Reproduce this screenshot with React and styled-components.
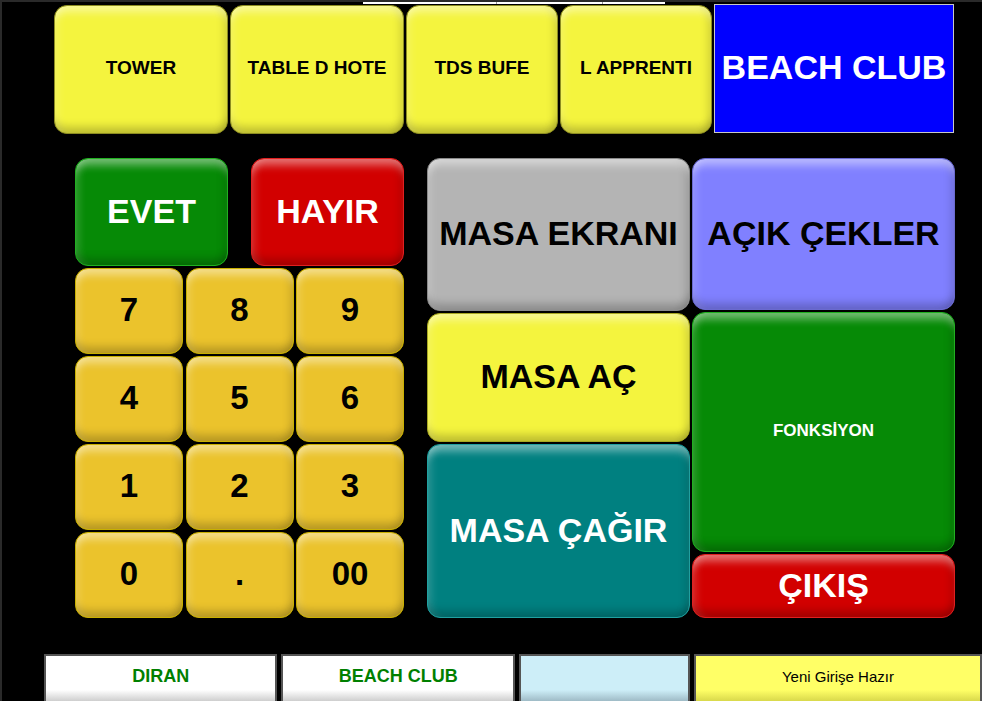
import styled, { createGlobalStyle, css } from "styled-components";

const Global = createGlobalStyle`
  html, body {
    margin: 0;
    padding: 0;
    background: #000;
    overflow: hidden;
  }
  body {
    font-family: "Liberation Sans", Arial, sans-serif;
  }
`

const Screen = styled.div`
  width: 980px;
  height: 699px;
  border-left: 2px solid #2a2a2a;
  border-top: 2px solid #2a2a2a;
  background: #000;
  display: flex;
  flex-direction: column;
  overflow: hidden;
`

const TopStrip = styled.div`
  height: 2px;
  padding-left: 361px;
  display: flex;
`

const WhiteLine = styled.div`
  width: 302px;
  height: 2px;
  background: linear-gradient(90deg, #fff 0 44%, #999 44% 44.4%, #fff 44.4% 79%, #999 79% 79.4%, #fff 79.4%);
`

const bevel = css`
  border-radius: 13px;
  box-shadow:
    inset 0 12px 8px -6px rgba(255, 255, 255, 0.45),
    inset 0 -12px 8px -6px rgba(0, 0, 0, 0.22),
    inset 9px 0 8px -6px rgba(255, 255, 255, 0.18),
    inset -9px 0 8px -6px rgba(0, 0, 0, 0.14);
`

const Key = styled.div`
  ${bevel};
  box-sizing: border-box;
  display: flex;
  align-items: center;
  justify-content: center;
  text-align: center;
  font-weight: bold;
  background: ${p => p.$bg};
  color: ${p => p.$color || "#000"};
  font-size: ${p => p.$size || 34}px;
  border: 1px solid ${p => p.$edge || "rgba(0,0,0,0.35)"};
  user-select: none;
`

const TopRow = styled.div`
  display: flex;
  gap: 2px;
  padding: 1px 0 0 52px;
  height: 129px;
`

const TopKey = styled(Key)`
  width: ${p => p.$w}px;
  height: 129px;
  font-size: 19px;
  padding-bottom: 4px;
`

const ClubBanner = styled.div`
  box-sizing: border-box;
  width: 240px;
  height: 129px;
  margin-top: -1px;
  padding-bottom: 2px;
  background: #0000ff;
  border: 1px solid #c8c8c8;
  color: #fff;
  font-weight: bold;
  font-size: 34px;
  display: flex;
  align-items: center;
  justify-content: center;
`

const Main = styled.div`
  display: flex;
  padding: 24px 0 0 73px;
  gap: 23px;
`

const LeftPad = styled.div`
  display: flex;
  flex-direction: column;
  gap: 2px;
  width: 329px;
`

const AnswerRow = styled.div`
  display: flex;
  justify-content: space-between;
  height: 108px;
`

const AnswerKey = styled(Key)`
  width: 153px;
  height: 108px;
  padding-bottom: 2px;
`

const NumGrid = styled.div`
  display: grid;
  grid-template-columns: 108px 108px 108px;
  grid-auto-rows: 86px;
  gap: 2px 2.5px;
`

const NumKey = styled(Key)`
  font-size: 33px;
  border-color: #c9b000;
  padding-bottom: 2px;
`

const Actions = styled.div`
  display: grid;
  grid-template-columns: 263px 263px;
  gap: 2px;
`

const ActionCol = styled.div`
  display: flex;
  flex-direction: column;
  gap: 2px;
`

const ActionKey = styled(Key)`
  height: ${p => p.$h}px;
  padding-bottom: 2px;
`

const Footer = styled.div`
  display: flex;
  padding: 36px 0 0 42px;
  gap: 4px;
`

const Tile = styled.div`
  box-sizing: border-box;
  width: ${p => p.$w}px;
  height: 52px;
  padding-bottom: 10px;
  border: 2px solid #555;
  border-bottom: none;
  background: linear-gradient(180deg, ${p => p.$bg} 0 68%, ${p => p.$shade} 100%);
  color: ${p => p.$color || "#000"};
  font-weight: ${p => (p.$plain ? "normal" : "bold")};
  font-size: ${p => p.$size || 18}px;
  display: flex;
  align-items: center;
  justify-content: center;
`

const YELLOW = "#f4f43e";
const GOLD = "#ebc32c";

const tops = [
  { label: "TOWER", w: 174 },
  { label: "TABLE D HOTE", w: 174 },
  { label: "TDS BUFE", w: 152 },
  { label: "L APPRENTI", w: 152 },
];

const keys = ["7", "8", "9", "4", "5", "6", "1", "2", "3", "0", ".", "00"];

const App = () => (
  <Screen>
    <Global />
    <TopStrip>
      <WhiteLine />
    </TopStrip>
    <TopRow>
      {tops.map(t => (
        <TopKey key={t.label} $w={t.w} $bg={YELLOW} $edge="#8c8c20">
          {t.label}
        </TopKey>
      ))}
      <ClubBanner>BEACH CLUB</ClubBanner>
    </TopRow>

    <Main>
      <LeftPad>
        <AnswerRow>
          <AnswerKey $bg="#068a06" $color="#fff" $edge="#20b020">EVET</AnswerKey>
          <AnswerKey $bg="#d20000" $color="#fff" $edge="#e02020">HAYIR</AnswerKey>
        </AnswerRow>
        <NumGrid>
          {keys.map(k => (
            <NumKey key={k} $bg={GOLD}>{k}</NumKey>
          ))}
        </NumGrid>
      </LeftPad>

      <Actions>
        <ActionCol>
          <ActionKey $h={153} $bg="#b4b4b4" $edge="#8a8a8a">MASA EKRANI</ActionKey>
          <ActionKey $h={129} $bg="#f4f43e" $edge="#a8a820">MASA AÇ</ActionKey>
          <ActionKey $h={174} $bg="#008080" $color="#fff" $edge="#20a0a0">MASA ÇAĞIR</ActionKey>
        </ActionCol>
        <ActionCol>
          <ActionKey $h={152} $bg="#8080ff" $edge="#6a6ad0">AÇIK ÇEKLER</ActionKey>
          <ActionKey $h={240} $bg="#068a06" $color="#fff" $size={17} $edge="#20b020">FONKSİYON</ActionKey>
          <ActionKey $h={64} $bg="#d20000" $color="#fff" $edge="#e02020">ÇIKIŞ</ActionKey>
        </ActionCol>
      </Actions>
    </Main>

    <Footer>
      <Tile $w={235} $bg="#ffffff" $shade="#b8b8b8" $color="#008000">DIRAN</Tile>
      <Tile $w={235} $bg="#ffffff" $shade="#b8b8b8" $color="#008000">BEACH CLUB</Tile>
      <Tile $w={172} $bg="#cdeef8" $shade="#8aa4b0" />
      <Tile $w={290} $bg="#ffff66" $shade="#c8c840" $plain $size={15}>Yeni Girişe Hazır</Tile>
    </Footer>
  </Screen>
)

export default App
